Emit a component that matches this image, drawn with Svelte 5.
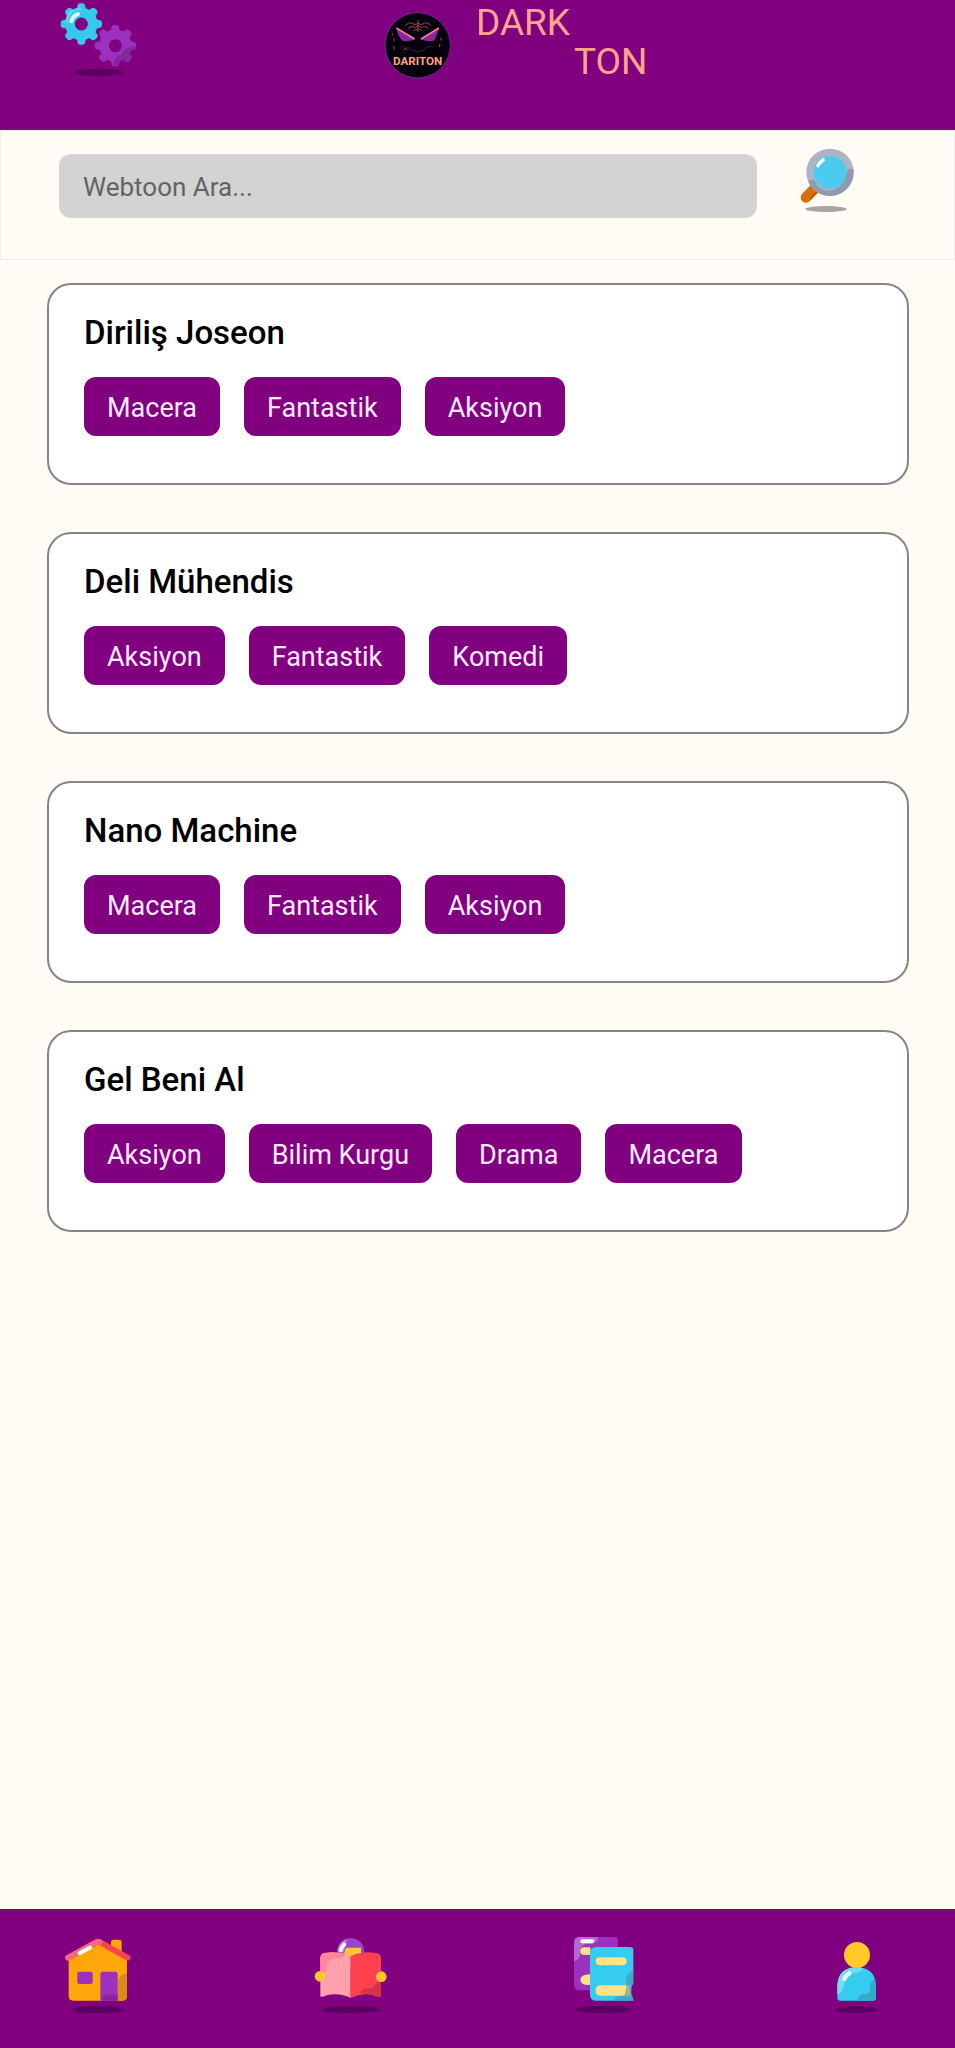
<script>
  const webtoons = [
    { title: 'Diriliş Joseon', tags: ['Macera', 'Fantastik', 'Aksiyon'] },
    { title: 'Deli Mühendis', tags: ['Aksiyon', 'Fantastik', 'Komedi'] },
    { title: 'Nano Machine', tags: ['Macera', 'Fantastik', 'Aksiyon'] },
    { title: 'Gel Beni Al', tags: ['Aksiyon', 'Bilim Kurgu', 'Drama', 'Macera'] }
  ];
  const teeth = [0, 45, 90, 135, 180, 225, 270, 315];
</script>

{#snippet gear(cx, cy, color)}
  <g transform="translate({cx} {cy})" fill={color}>
    <circle r="34" fill="none" stroke={color} stroke-width="29" />
    {#each teeth as angle}
      <path d="M-14 -42 L-11 -57 Q-9 -62 -4 -62 H4 Q9 -62 11 -57 L14 -42Z" transform="rotate({angle})" />
    {/each}
  </g>
{/snippet}

<div class="page">
  <header>
    <button class="icon settings" aria-label="Ayarlar">
      <svg viewBox="60 0 231 231" width="77" height="77">
        <defs>
          <clipPath id="gearShade"><path d="M218 198 Q222 169 244 164 Q251 140 290 137 V210 H218Z" /></clipPath>
        </defs>
        <ellipse cx="176" cy="217" rx="72" ry="11" fill="#5a0060" />
        {@render gear(226, 137, '#9c31c0')}
        <g clip-path="url(#gearShade)">{@render gear(226, 137, '#84289f')}</g>
        {@render gear(124, 72, '#35c9ed')}
        <path d="M80 68 Q81 42 98 33 Q109 24 126 27" fill="none" stroke="#7be0f4" stroke-width="8" opacity=".6" />
        <path d="M94 64 Q98 48 114 42" fill="none" stroke="#e3fafd" stroke-width="12" stroke-linecap="round" />
      </svg>
    </button>
    <a class="brand" href="#home">
      <svg viewBox="36 32 213 213" width="71" height="71" aria-hidden="true">
        <circle cx="143" cy="138" r="98" fill="#05000b" stroke="#712499" stroke-width="3" />
        <path d="M79 86 L134 119 Q125 127 97 124 Q84 112 79 86Z" fill="#8e249f" />
        <path d="M207 86 L153 119 Q161 127 192 124 Q201 110 207 86Z" fill="#8e249f" />
        <path d="M79 86 L134 119 M207 86 L153 119" stroke="#f77b91" stroke-width="5" />
        <path d="M144 62 V98 M106 79 Q116 67 124 71 Q132 79 144 73 Q157 79 164 71 Q174 67 183 79 M114 88 Q126 77 134 85 L144 80 L155 85 Q164 77 175 88 M132 94 L144 88 L157 94" fill="none" stroke="#a54555" stroke-width="3" />
        <path d="M67 101 V109 M72 116 V126 M72 140 V152 M213 115 V124 M209 133 V143 M101 153 L107 146 L113 153" fill="none" stroke="#a54555" stroke-width="3" />
        <path d="M93 143 Q114 139 127 155 M191 143 Q168 138 159 155 M125 151 L144 158 L164 151" fill="none" stroke="#302041" stroke-width="3" />
        <text x="143" y="198" text-anchor="middle" class="emblem">DARITON</text>
      </svg>
      <span class="wordmark"><span>DARK</span><span class="second">TON</span></span>
    </a>
  </header>

  <form class="search" onsubmit={(event) => event.preventDefault()}>
    <input type="text" placeholder="Webtoon Ara..." aria-label="Webtoon Ara" />
    <button class="icon" aria-label="Ara">
      <svg viewBox="28 54 228 228" width="76" height="76">
        <defs><clipPath id="lensShade"><path d="M86 152 Q107 142 111 166 Q139 192 168 177 Q196 162 200 128 Q202 112 225 118 V210 H80Z" /></clipPath></defs>
        <ellipse cx="139" cy="237" rx="62" ry="9" fill="#aaa49f" />
        <path d="M108 172 L79 202" stroke="#d5700b" stroke-width="32" stroke-linecap="round" />
        <path d="M118 180 L92 206" stroke="#b65e0e" stroke-width="7" />
        <circle cx="151" cy="127" r="60" fill="#4accee" stroke="#adb4c6" stroke-width="22" />
        <circle cx="151" cy="127" r="60" fill="none" stroke="#9099ad" stroke-width="22" clip-path="url(#lensShade)" />
        <path d="M115 107 Q119 97 130 90" fill="none" stroke="#fff" stroke-width="11" stroke-linecap="round" />
      </svg>
    </button>
  </form>

  <main>
    {#each webtoons as toon}
      <article>
        <h2>{toon.title}</h2>
        <div class="tags">
          {#each toon.tags as tag}<button class="tag">{tag}</button>{/each}
        </div>
      </article>
    {/each}
  </main>

  <nav>
    <a href="#home" aria-label="Ana sayfa">
      <svg viewBox="34 36 228 228" width="76" height="76">
        <ellipse cx="147" cy="254" rx="77" ry="11" fill="#5a0060" />
        <rect x="187" y="44" width="32" height="60" rx="8" fill="#ffa70a" />
        <path d="M60 99 L148 47 L235 99 V213 Q235 227 221 227 H74 Q60 227 60 213Z" fill="#ffa70a" />
        <path d="M207 227 V170 Q211 150 235 144 V213 Q235 227 221 227Z" fill="#db8c18" />
        <rect x="86" y="140" width="46" height="37" rx="6" fill="#9c31c0" />
        <path d="M155 227 V148 Q155 140 163 140 H199 Q207 140 207 148 V227Z" fill="#9c31c0" />
        <path d="M160 227 Q164 207 183 208 H207 V227Z" fill="#84289f" />
        <path d="M58 98 L143 51 Q148 48 153 51 L237 98" fill="none" stroke="#ff4450" stroke-width="17" stroke-linecap="round" stroke-linejoin="round" />
        <path d="M58 98 L143 51 L153 51" fill="none" stroke="#f86981" stroke-width="16" stroke-linecap="round" stroke-linejoin="round" />
        <path d="M93 84 L124 68" stroke="#fff" stroke-width="12" stroke-linecap="round" />
      </svg>
    </a>
    <a href="#read" aria-label="Oku">
      <svg viewBox="40 36 228 228" width="76" height="76">
        <ellipse cx="153" cy="254" rx="87" ry="10" fill="#5a0060" />
        <circle cx="153" cy="80" r="41" fill="#9844cc" />
        <path d="M114 82 Q114 52 142 43 Q141 61 132 83Z" fill="#ba80da" />
        <path d="M123 76 Q126 65 134 58" fill="none" stroke="#fff" stroke-width="11" stroke-linecap="round" />
        <path d="M140 68 H184 V100 H127Z" fill="#ffc52f" />
        <path d="M153 93 Q118 79 82 83 Q62 83 62 99 V215 Q68 217 81 211 Q119 202 153 219Z" fill="#ffa0ac" />
        <path d="M62 149 V99 Q62 83 82 83 Q111 80 137 87 Q132 101 105 100 Q84 102 82 126 Q80 146 62 149Z" fill="#ff8799" />
        <path d="M153 93 Q187 79 225 83 Q244 84 244 99 V215 Q233 217 221 211 Q187 202 153 219Z" fill="#ff404e" />
        <path d="M182 206 Q182 190 209 190 Q223 190 226 176 L244 169 V215 Q233 217 221 211 Q202 205 182 206Z" fill="#d63348" />
        <circle cx="61" cy="154" r="16" fill="#ffc52f" /><circle cx="245" cy="155" r="16" fill="#ffc52f" />
      </svg>
    </a>
    <a href="#library" aria-label="Kitaplık">
      <svg viewBox="19 36 228 228" width="76" height="76">
        <ellipse cx="132" cy="254" rx="84" ry="11" fill="#5a0060" />
        <path d="M59 36 H166 Q174 36 174 44 V196 H60 Q43 196 43 179 V54 Q43 36 59 36Z" fill="#9c31c0" />
        <path d="M43 109 V54 Q43 36 59 36 H116 Q113 60 84 56 Q63 58 63 79 Q64 104 43 109Z" fill="#b766d1" />
        <path d="M68 49 H98" stroke="#fff" stroke-width="12" stroke-linecap="round" />
        <path d="M92 67 H74 Q62 67 62 78 Q62 90 74 90 H92ZM92 148 Q62 147 62 166 Q64 182 92 180Z" fill="#ffe187" />
        <path d="M109 66 H212 Q221 66 221 75 V177 Q215 180 215 190 V211 Q221 215 221 227 H108 Q91 227 91 208 V84 Q91 66 109 66Z" fill="#35ccf0" />
        <rect x="108" y="97" width="93" height="24" rx="12" fill="#ffe187" />
        <path d="M211 181 H124 Q108 181 108 197 Q108 212 124 212 H215 Q207 197 211 181Z" fill="#ffe187" />
        <path d="M161 227 Q164 211 193 212 Q202 196 199 160 Q203 144 221 136 V177 Q210 181 212 197 Q213 210 221 216 V227Z" fill="#4689a0" opacity=".5" />
      </svg>
    </a>
    <a href="#profile" aria-label="Profil">
      <svg viewBox="27 36 228 228" width="76" height="76">
        <ellipse cx="140" cy="254" rx="64" ry="10" fill="#5a0060" />
        <path d="M82 218 V184 Q84 127 140 127 Q196 127 198 184 V218 Q198 227 189 227 H91 Q82 227 82 218Z" fill="#35ccf0" />
        <path d="M82 208 V184 Q84 127 140 127 Q152 128 159 131 Q151 143 130 144 Q103 150 102 181 Q99 202 82 208Z" fill="#76dbed" />
        <path d="M143 227 Q143 208 168 207 Q184 205 180 181 Q181 169 195 163 L198 184 V218 Q198 227 189 227Z" fill="#32abc8" />
        <path d="M103 162 Q108 150 118 145" fill="none" stroke="#e5fafd" stroke-width="13" stroke-linecap="round" />
        <circle cx="141" cy="90" r="39" fill="#ffc928" />
      </svg>
    </a>
  </nav>
</div>

<style>
  :global(body) { margin: 0; background: #fffcf5; }
  .page {
    min-height: 100vh;
    display: flex;
    flex-direction: column;
    font-family: Roboto, 'Noto Sans', sans-serif;
    background: #fffcf5;
  }
  svg { display: block; }
  button { border: 0; font: inherit; cursor: pointer; }
  .icon { padding: 0; background: none; }
  header {
    box-sizing: border-box;
    height: 130px;
    display: grid;
    grid-template-columns: 40% 1fr;
    align-items: start;
    background: #800080;
  }
  .settings { justify-self: start; margin-left: 60px; }
  .brand { display: flex; gap: 23px; color: #ffa58b; text-decoration: none; }
  .brand svg { margin-top: 10px; }
  .wordmark {
    display: flex;
    flex-direction: column;
    padding-top: 3px;
    font-size: 37px;
    line-height: 39px;
  }
  .second { padding-left: 98px; }
  .emblem { font: bold 35px Roboto, sans-serif; fill: #ffa184; }
  .search {
    display: flex;
    align-items: center;
    gap: 32px;
    padding: 17px 89px 35px 58px;
    border: 1px solid #f0eee9;
  }
  input {
    box-sizing: border-box;
    flex: 1;
    min-width: 0;
    height: 64px;
    padding: 2px 24px 0;
    border: 0;
    border-radius: 12px;
    background: #d3d3d3;
    font: inherit;
    font-size: 26px;
  }
  input::placeholder { color: #636363; opacity: 1; }
  main {
    flex: 1;
    display: flex;
    flex-direction: column;
    gap: 47px;
    padding: 23px 46px 46px 47px;
  }
  article {
    padding: 24px 35px 47px;
    border: 2px solid #858585;
    border-radius: 24px;
    background: #fff;
  }
  h2 { margin: 0 0 20px; font-size: 33px; font-weight: 500; line-height: 48px; color: #000; }
  .tags { display: flex; flex-wrap: wrap; gap: 24px; }
  .tag {
    height: 59px;
    padding: 2px 23px 0;
    border-radius: 12px;
    background: #800080;
    color: #ffeaff;
    font-size: 27px;
  }
  nav {
    display: flex;
    justify-content: space-between;
    padding: 28px 60px 35px;
    background: #800080;
  }
</style>
